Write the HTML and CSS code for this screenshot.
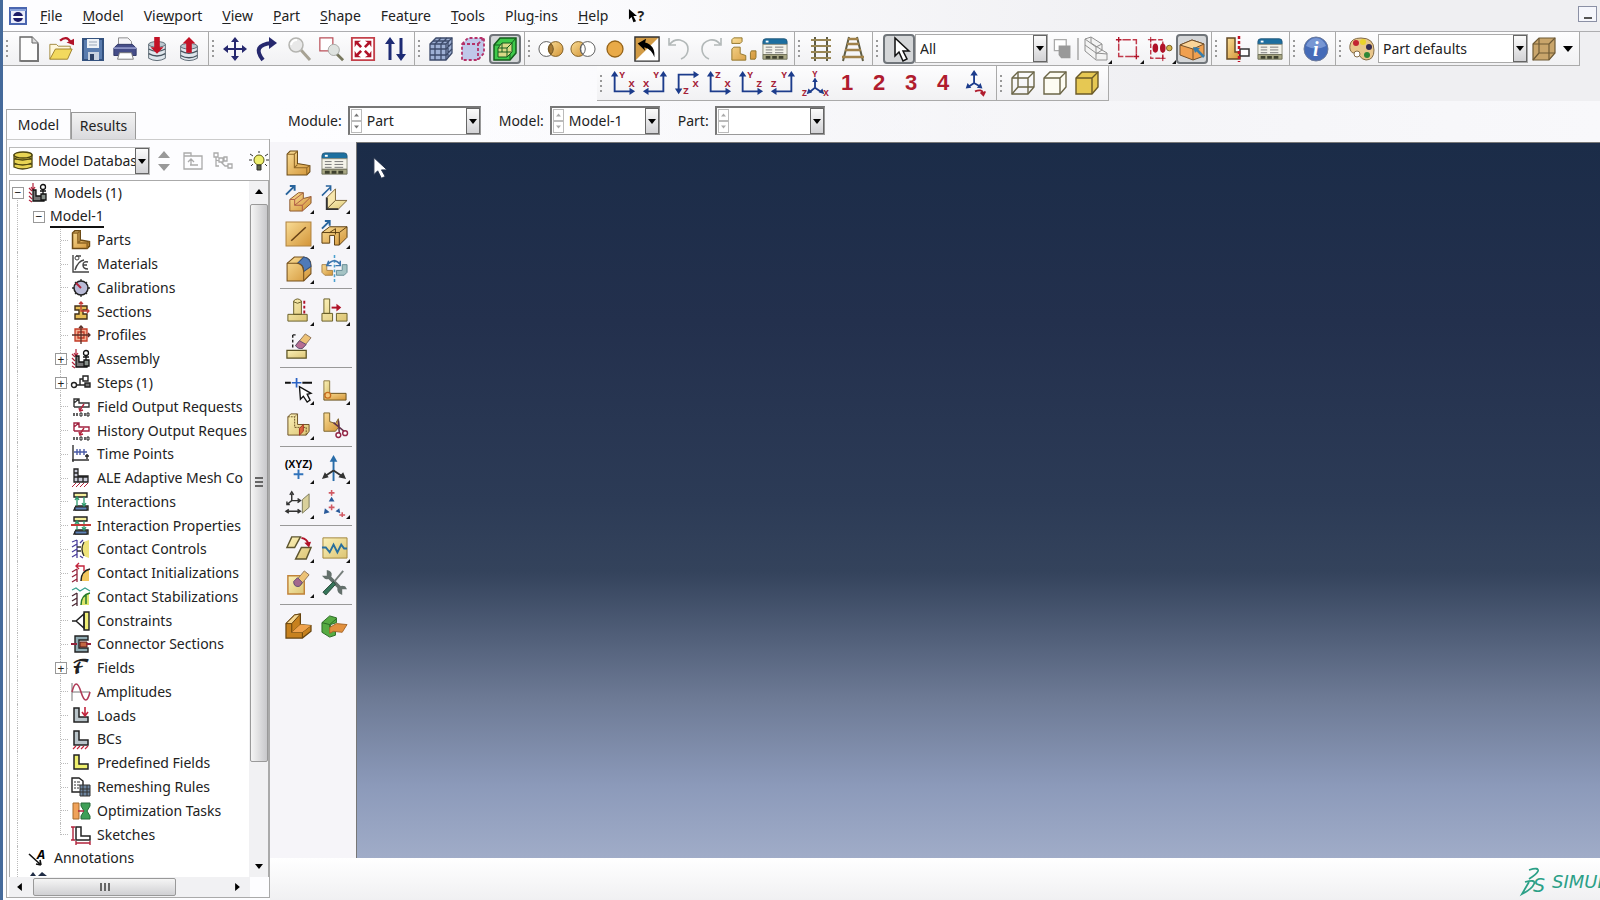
FILE: index.html
```html
<!DOCTYPE html>
<html lang="en">
<head>
    <meta charset="UTF-8">
    <meta name="viewport" content="width=device-width, initial-scale=1.0">
    <title>Model-1</title>
    <link rel="stylesheet" href="styles.css">
</head>
<body>
    <!-- shared icons -->
    <svg class="sprite" aria-hidden="true">
        <defs>
            <linearGradient id="gold" x1="0" y1="0" x2="1" y2="1">
                <stop offset="0" stop-color="#f9dc95"/><stop offset="1" stop-color="#d39538"/>
            </linearGradient>
            <linearGradient id="cream" x1="0" y1="0" x2="1" y2="1">
                <stop offset="0" stop-color="#fbf1b8"/><stop offset="1" stop-color="#dcc474"/>
            </linearGradient>
        </defs>
        <symbol id="table" viewBox="0 0 28 26">
            <path d="M1 5q0-3 3-3h20q3 0 3 3v3H1z" fill="#1c6fa0" stroke="#24587a"/>
            <path d="M4 5h3" stroke="#fff" stroke-width="2"/>
            <path d="M1 8h26v11H1z" fill="#f4f3ea" stroke="#8b8c7c"/>
            <path d="M4 11h7M4 14h7M4 17h7M14 11h9M14 14h9M14 17h9" stroke="#777" stroke-width="1"/>
            <path d="M1 19h26v5H1z" fill="#a9a884" stroke="#6f7059"/>
            <path d="M4 22h5M11 22h5M18 22h5" stroke="#3f412f" stroke-width="3"/>
        </symbol>
        <symbol id="lpart" viewBox="0 0 26 26">
            <path d="M2 4l3-3h7v12l12 2v6l-3 3H2z" fill="url(#gold)" stroke="#6b4a16"/>
            <path d="M2 4h7v13h12v7M9 4l3-3M9 17l3-3M21 17l3-2" fill="none" stroke="#8f6625"/>
        </symbol>
        <symbol id="cube" viewBox="0 0 26 26">
            <path d="M2 8l6-6h16v15l-6 7H2z"/><path d="M2 8h16v16M18 8l6-6" fill="none"/>
        </symbol>
        <symbol id="lgrey" viewBox="0 0 20 20">
            <path d="M3 2h5v9h9v5H3z" stroke="#222" stroke-width="1.5"/>
        </symbol>
        <symbol id="contact" viewBox="0 0 20 20">
            <path d="M3 1h13v4H3zM5 14h12v4H3z" fill="#f5ef9c" stroke="#222" stroke-width="1.4"/>
            <path d="M4 15h12v3H4z" fill="#5f83b8" stroke="#222"/>
            <path d="M6 5v9M13 5v9M4 8l2-3 2 3M11 11l2 3 2-3" fill="none" stroke="#2c9a6c" stroke-width="1.3"/>
        </symbol>
        <symbol id="assembly" viewBox="0 0 20 20">
            <path d="M1 5l3 3M1 9l3 3M1 13l3 3M1 17l3 2M5 0v6M3 4l2 3 2-3" fill="none" stroke="#b2243c" stroke-width="1.2"/>
            <path d="M5 7h3v6h8v5H5z" fill="#777" stroke="#111" stroke-width="1.3"/>
            <path d="M15 6v5M12 8h6" stroke="#111" stroke-width="1.3"/><circle cx="15" cy="4" r="2.5" fill="#fff" stroke="#111" stroke-width="1.3"/>
            <path d="M13 11h5v6h-5z" fill="#87908a" stroke="#111" stroke-width="1.3"/>
        </symbol>
        <symbol id="output" viewBox="0 0 20 20">
            <path d="M3 10V2h5v4h10v4H3M3 6l5-4" fill="none" stroke-width="1.4"/>
            <path d="M13 7l-4 6M8 11l1 3 3-1" fill="none" stroke="#b2243c" stroke-width="1.4"/>
            <path d="M3 16v3M6 16v3M14 16v3" stroke="#222" stroke-width="1.4"/><path d="M9 16h2v3H9zM16 16h2v3h-2z" fill="none" stroke="#222"/>
        </symbol>
        <symbol id="down" viewBox="0 0 10 6"><path d="M0 0h10L5 6z"/></symbol>
        <symbol id="up" viewBox="0 0 10 6"><path d="M0 6h10L5 0z"/></symbol>
    </svg>

    <nav class="menubar">
        <svg class="app-icon" viewBox="0 0 18 18"><path d="M1 1h16v16H1z" fill="#e9ecfa" stroke="#4a66b0" stroke-width="2"/><path d="M1 3h16" stroke="#8ba4dc" stroke-width="2"/><circle cx="9" cy="10" r="5" fill="#1d1c68"/><path d="M3 10h12" stroke="#fff" stroke-width="2"/></svg>
        <a href="#"><u>F</u>ile</a>
        <a href="#"><u>M</u>odel</a>
        <a href="#">Vie<u>w</u>port</a>
        <a href="#"><u>V</u>iew</a>
        <a href="#"><u>P</u>art</a>
        <a href="#"><u>S</u>hape</a>
        <a href="#">Feat<u>u</u>re</a>
        <a href="#"><u>T</u>ools</a>
        <a href="#">Plu<u>g</u>-ins</a>
        <a href="#"><u>H</u>elp</a>
        <button class="context-help" aria-label="Context help"><svg viewBox="0 0 10 18"><path d="M1 1v12l3-3 2 6 3-1-3-6h4z"/></svg><b>?</b></button>
        <button class="minimize" aria-label="Minimize"></button>
    </nav>

    <div class="toolbar">
        <div class="group">
            <i class="grip"></i>
            <button aria-label="New"><svg viewBox="0 0 26 26"><path d="M4 1h12l6 6v18H4z" fill="#fdfdfd" stroke="#666" stroke-width="1.3"/><path d="M16 1v6h6" fill="#ddd" stroke="#666"/><path d="M22 8v17H5" fill="none" stroke="#777" stroke-width="2"/></svg></button>
            <button aria-label="Open"><svg viewBox="0 0 28 26"><path d="M2 24V8h7l2 2h13v5" fill="#fff8dc" stroke="#a0873b"/><path d="M2 24l6-11h18l-5 11z" fill="#f3d95e" stroke="#9b7d29"/><path d="M13 4q7-6 11 1" fill="none" stroke="#b01228" stroke-width="2.5"/><path d="M20 6l8-4v7z" fill="#b01228"/></svg></button>
            <button aria-label="Save"><svg viewBox="0 0 26 26"><path d="M3 3h20v21H3z" fill="#5a7cae" stroke="#34527f" stroke-width="2"/><path d="M7 3h12v9H7z" fill="#eef2f6"/><path d="M9 6h8M9 9h8" stroke="#9aa7b8"/><path d="M8 16h11v8H8z" fill="#c8d2e0"/><path d="M10 18h4v6h-4z" fill="#2d4165"/></svg></button>
            <button aria-label="Print"><svg viewBox="0 0 28 26"><path d="M7 8V1h10l4 4v4" fill="#f5f5f8" stroke="#888"/><path d="M2 12l4-4h16l4 4v8H2z" fill="#454d88" stroke="#2f3565"/><path d="M2 12h24" stroke="#8b92c4" stroke-width="2"/><path d="M8 17h13l2 7H6z" fill="#fff" stroke="#777"/></svg></button>
            <button aria-label="Save model database"><svg viewBox="0 0 26 28"><path d="M4 9v15q9 5 18 0V9z" fill="#dfe6ec" stroke="#56636e"/><path d="M4 14q9 5 18 0M4 19q9 5 18 0" fill="none" stroke="#47545f" stroke-width="1.5"/><ellipse cx="13" cy="9" rx="9" ry="3" fill="#bcc7cf" stroke="#56636e"/><path d="M10 1h6v11h4l-7 7-7-7h4z" fill="#c31226"/></svg></button>
            <button aria-label="Import model database"><svg viewBox="0 0 26 28"><path d="M4 11v13q9 5 18 0V11z" fill="#dfe6ec" stroke="#56636e"/><path d="M4 16q9 5 18 0M4 21q9 5 18 0" fill="none" stroke="#47545f" stroke-width="1.5"/><ellipse cx="13" cy="11" rx="9" ry="3" fill="#bcc7cf" stroke="#56636e"/><path d="M10 18V8H6l7-7 7 7h-4v10z" fill="#c31226"/></svg></button>
        </div>
        <div class="group">
            <i class="grip"></i>
            <button aria-label="Pan"><svg viewBox="0 0 26 26"><path d="M13 4v18M4 13h18" stroke="#26286e" stroke-width="2"/><path d="M13 1l4 5H9zM13 25l4-5H9zM1 13l5-4v8zM25 13l-5-4v8z" fill="#26286e"/></svg></button>
            <button aria-label="Rotate"><svg viewBox="0 0 26 26"><path d="M9 24Q-3 9 18 7" fill="none" stroke="#26286e" stroke-width="4"/><path d="M15 1l8 6-8 6z" fill="#26286e"/></svg></button>
            <button aria-label="Magnify"><svg viewBox="0 0 26 26"><path d="M15 14l9 10" stroke="#a7a294" stroke-width="3"/><circle cx="10" cy="9" r="7" fill="#e8e8e8" stroke="#b4b4b0" stroke-width="1.5"/><path d="M5 9q1-5 6-5" fill="none" stroke="#fff" stroke-width="2"/></svg></button>
            <button aria-label="Box zoom"><svg viewBox="0 0 28 28"><path d="M2 2h14v14H2z" fill="#fff" stroke="#b94f58" stroke-width="1.3"/><path d="M20 19l7 7" stroke="#77775d" stroke-width="3"/><circle cx="17" cy="15" r="6" fill="#dfe3e0" stroke="#a5a8a4"/></svg></button>
            <button aria-label="Auto-fit"><svg viewBox="0 0 28 28"><path d="M2 2h24v24H2z" fill="#fff" stroke="#c4414b" stroke-width="2"/><g fill="#b01228"><path d="M5 5h7l-3 2 4 4-2 2-4-4-2 3zM23 5v7l-2-3-4 4-2-2 4-4-3-2zM5 23v-7l2 3 4-4 2 2-4 4 3 2zM23 23h-7l3-2-4-4 2-2 4 4 2-3z"/></g></svg></button>
            <button aria-label="Cycle views"><svg viewBox="0 0 26 26"><path d="M8 5v19M19 2v18" stroke="#1d2b74" stroke-width="3"/><path d="M8 1l5 7H3zM19 25l5-7H14z" fill="#1d2b74"/></svg></button>
        </div>
        <div class="group">
            <i class="grip"></i>
            <button aria-label="Show native mesh"><svg viewBox="0 0 26 26"><g fill="#9eb0d4" stroke="#3c4a6a" stroke-width="1.3"><use href="#cube"/><path d="M7 8v16M13 8v16M2 13h16l6-6M2 19h16l6-6M7 8l6-6M13 8l6-6M20 6v15M5 5h16" fill="none"/></g></svg></button>
            <button aria-label="Show seeds"><svg viewBox="0 0 26 26"><g fill="#c0c8ea" stroke="#b53169" stroke-width="1.8" stroke-dasharray="3 2"><use href="#cube"/></g></svg></button>
            <button class="pressed" aria-label="Shaded"><svg viewBox="0 0 26 26"><path d="M2 9l6-7h16v15l-6 7H2z" fill="#3fc94a" stroke="#145c1c" stroke-width="1.5"/><path d="M2 9h16v15M18 9l6-7" fill="none" stroke="#145c1c"/><path d="M6 12l4-5h10v9l-5 5H6z" fill="#d9d987" stroke="#145c1c"/><path d="M6 12h9v9M15 12l5-5M10 7v9H6M10 16h9" fill="none" stroke="#145c1c"/></svg></button>
        </div>
        <div class="group">
            <i class="grip"></i>
            <button aria-label="Intersect"><svg viewBox="0 0 28 26"><circle cx="9" cy="13" r="8" fill="#fff" stroke="#555"/><circle cx="19" cy="13" r="8" fill="url(#gold)" stroke="#7b5a20"/><path d="M14 7q-5 6 0 12 5-6 0-12" fill="#a77b35" stroke="#6b5021"/></svg></button>
            <button aria-label="Subtract"><svg viewBox="0 0 28 26"><circle cx="9" cy="13" r="8" fill="url(#gold)" stroke="#7b5a20"/><circle cx="19" cy="13" r="8" fill="#fff" stroke="#555"/><path d="M14 7q-5 6 0 12 5-6 0-12" fill="#fff" stroke="#555"/></svg></button>
            <button aria-label="Replace all"><svg viewBox="0 0 26 26"><circle cx="13" cy="13" r="8" fill="#e9aa48" stroke="#966419" stroke-width="1.3"/></svg></button>
            <button aria-label="Swap"><svg viewBox="0 0 28 28"><path d="M1 1h26v26H1z" fill="#fff"/><path d="M1 1h26L1 27z" fill="#d29b45"/><path d="M1 1h26v26H1z" fill="none" stroke="#333" stroke-width="1.5"/><path d="M4 8l9-5-1 4q11 3 10 16-3-9-11-11l1 4z"/></svg></button>
            <button aria-label="Undo"><svg viewBox="0 0 26 26"><path d="M4 8q4-5 10-4 8 2 8 9 0 7-7 10M3 2v7h7" fill="none" stroke="#b2b8b8" stroke-width="1.6"/></svg></button>
            <button aria-label="Redo"><svg viewBox="0 0 26 26"><path d="M22 8q-4-5-10-4-8 2-8 9 0 7 7 10M23 2v7h-7" fill="none" stroke="#b2b8b8" stroke-width="1.6"/></svg></button>
            <button aria-label="Create display group"><svg viewBox="0 0 28 26"><g fill="url(#gold)" stroke="#8f7228"><path d="M2 3l2-2h9v4l-2 2H2zM2 13l2-2h7v7l6 2v5H2zM22 17l1-2h5v7l-1 2h-5z"/></g></svg></button>
            <button aria-label="Display group manager"><svg viewBox="0 0 28 26"><use href="#table"/></svg></button>
        </div>
        <div class="group">
            <i class="grip"></i>
            <button aria-label="Parallel"><svg viewBox="0 0 26 26"><path d="M7 1v24M19 1v24" stroke="#5e5c44" stroke-width="2"/><path d="M3 4h20M3 10h20M3 16h20M3 22h20" stroke="#998755" stroke-width="2"/></svg></button>
            <button aria-label="Perspective"><svg viewBox="0 0 26 26"><path d="M9 1L3 25M17 1l6 24" stroke="#5e5c44" stroke-width="2"/><path d="M8 3h10M7 8h12M5 14h16M2 21h22" stroke="#a1824a" stroke-width="2.4"/></svg></button>
        </div>
        <div class="group">
            <i class="grip"></i>
            <button class="pressed" aria-label="Select"><svg viewBox="0 0 26 26"><path d="M9 2v18l4-4 4 9 4-2-4-8h6z" fill="#fff" stroke="#111" stroke-width="1.5"/></svg></button>
            <div class="combo combo-filter">
                <select aria-label="Selection filter"><option>All</option></select>
                <span class="arrow"><svg><use href="#down"/></svg></span>
            </div>
            <button class="slim" aria-label="Highlight"><svg viewBox="0 0 26 26"><path d="M4 2h14v13H4z" fill="#fff" stroke="#aaa" stroke-width="1.5"/><path d="M9 9h14v15H12l-3-4z" fill="#999"/></svg></button>
            <i class="divider"></i>
            <button class="more" aria-label="Selection entity"><svg viewBox="0 0 26 26"><g fill="#f3f3f3" stroke="#909090"><path d="M2 3l6-2 11 7v6l5 3v7H13L2 15z"/><path d="M2 3l11 8v12M13 11l6-3M13 18l6-4M2 9l11 8 11 1M8 1v6l11 7" fill="none"/></g></svg></button>
            <button class="more" aria-label="Drag shape"><svg viewBox="0 0 28 28"><path d="M8 4h15v15M20 22H4V8" fill="none" stroke="#c13a4b" stroke-width="1.6" stroke-dasharray="9 2"/><path d="M1 4h6M4 1v6M20 22h6M23 19v6" stroke="#b01228" stroke-width="1.5"/></svg></button>
            <button class="more" aria-label="Inside and crossing"><svg viewBox="0 0 28 28"><path d="M5 4h12v20H4V4" fill="none" stroke="#c13a4b" stroke-width="1.5" stroke-dasharray="5 2"/><path d="M1 4h6M4 1v6M14 24h6M17 21v6" stroke="#b01228"/><ellipse cx="9" cy="13" rx="3" ry="5" fill="#b01228"/><ellipse cx="17" cy="13" rx="3" ry="5" fill="#b01228"/><circle cx="24" cy="13" r="3" fill="#d6b54c" stroke="#765b1c"/></svg></button>
            <button class="pressed" aria-label="Select from exterior"><svg viewBox="0 0 26 26"><path d="M1 9l12-5 12 4v12l-11 4-13-5z" fill="#f0a050" stroke="#75502a"/><path d="M1 9l12-5 12 4-11 5z" fill="#fbd59a" stroke="#75502a"/><path d="M14 13v11" stroke="#75502a"/><path d="M17 13l8 8" stroke="#387dab" stroke-width="2.5"/><path d="M14 11l7 1-5 5z" fill="#387dab"/></svg></button>
        </div>
        <div class="group">
            <i class="grip"></i>
            <button aria-label="Create field"><svg viewBox="0 0 26 26"><path d="M2 2h8v14h5v7H2z" fill="url(#gold)" stroke="#644a24" stroke-width="1.5"/><path d="M15 13h9v7h-9z" fill="#fff" stroke="#333" stroke-width="1.5"/><path d="M14 0v26" stroke="#c31226" stroke-width="2.5" stroke-dasharray="3 2"/></svg></button>
            <button aria-label="Field manager"><svg viewBox="0 0 28 26"><use href="#table"/></svg></button>
        </div>
        <div class="group">
            <i class="grip"></i>
            <button aria-label="Query information"><svg viewBox="0 0 26 26"><circle cx="13" cy="13" r="12" fill="#456bb8" stroke="#6d7b9b"/><path d="M3 10q3-8 10-8t10 8q-10 5-20 0" fill="#7796d3"/><text x="10" y="20" font-size="20" font-style="italic" font-weight="bold" fill="#fff" class="serif">i</text></svg></button>
        </div>
        <div class="group">
            <i class="grip"></i>
            <button aria-label="Colors"><svg viewBox="0 0 26 26"><path d="M1 9Q2 2 12 2q13 0 13 12 0 10-8 10-4 0-7-5-3-4-6-2Q0 15 1 9z" fill="#e8c68b" stroke="#846c46"/><circle cx="7" cy="7" r="3" fill="#c32432"/><circle cx="14" cy="6" r="3" fill="#ebd32c"/><circle cx="20" cy="11" r="3" fill="#342a52"/><circle cx="18" cy="19" r="3" fill="#2e8736"/><circle cx="8" cy="18" r="3" fill="#fff" stroke="#846c46"/></svg></button>
            <div class="combo combo-color">
                <select aria-label="Color coding"><option>Part defaults</option></select>
                <span class="arrow"><svg><use href="#down"/></svg></span>
            </div>
            <button aria-label="Translucency"><svg viewBox="0 0 26 26"><g fill="#c9a56b" stroke="#6e5a35" stroke-width="1.2"><use href="#cube"/><path d="M8 2v15h16M2 24l6-7" fill="none"/></g></svg></button>
            <button class="drop" aria-label="Translucency level"><svg><use href="#down"/></svg></button>
        </div>
    </div>

    <div class="toolbar views">
        <div class="group">
            <i class="grip"></i>
            <button aria-label="Front view"><svg class="axes" viewBox="0 0 28 28"><path d="M5 5v18h17"/><path class="tip" d="M5 1l4 6H1zM27 23l-6-4v8z"/><text x="10" y="9">Y</text><text x="20" y="18">X</text></svg></button>
            <button aria-label="Back view"><svg class="axes" viewBox="0 0 28 28"><path d="M23 5v18H6"/><path class="tip" d="M23 1l4 6h-8zM1 23l6-4v8z"/><text x="12" y="9">Y</text><text x="1" y="18">X</text></svg></button>
            <button aria-label="Top view"><svg class="axes" viewBox="0 0 28 28"><path d="M5 22V5h17"/><path class="tip" d="M5 26l4-6H1zM27 5l-6-4v8z"/><text x="20" y="18">X</text><text x="10" y="26">Z</text></svg></button>
            <button aria-label="Bottom view"><svg class="axes" viewBox="0 0 28 28"><path d="M5 5v18h17"/><path class="tip" d="M5 1l4 6H1zM27 23l-6-4v8z"/><text x="10" y="9">Z</text><text x="20" y="18">X</text></svg></button>
            <button aria-label="Left view"><svg class="axes" viewBox="0 0 28 28"><path d="M5 5v18h17"/><path class="tip" d="M5 1l4 6H1zM27 23l-6-4v8z"/><text x="10" y="9">Y</text><text x="20" y="18">Z</text></svg></button>
            <button aria-label="Right view"><svg class="axes" viewBox="0 0 28 28"><path d="M23 5v18H6"/><path class="tip" d="M23 1l4 6h-8zM1 23l6-4v8z"/><text x="12" y="9">Y</text><text x="1" y="18">Z</text></svg></button>
            <button aria-label="Isometric view"><svg class="axes small" viewBox="0 0 28 28"><path d="M14 11v8l-6 5M14 19l7 5"/><path class="tip" d="M14 8l3 5h-6zM5 26l2-6 4 4zM24 26l-2-6-4 4z"/><text x="11" y="7">Y</text><text x="0" y="28">Z</text><text x="23" y="28">X</text></svg></button>
            <button class="view-number">1</button>
            <button class="view-number">2</button>
            <button class="view-number">3</button>
            <button class="view-number">4</button>
            <button aria-label="Save view"><svg class="axes" viewBox="0 0 28 28"><path d="M13 4v10l-6 4M13 14l7 4"/><path class="tip" d="M13 0l4 6H9zM4 20l2-6 4 5zM22 20l-2-6-4 5z"/><path class="turn" d="M14 23q7-3 9 2M20 24l3 3 2-4"/></svg></button>
        </div>
        <div class="group">
            <i class="grip"></i>
            <button aria-label="Wireframe"><svg viewBox="0 0 26 26"><g fill="none" stroke="#6b6547" stroke-width="1.4"><use href="#cube"/><path d="M8 2v15h16M2 24l6-7"/></g></svg></button>
            <button aria-label="Hidden line"><svg viewBox="0 0 26 26"><g fill="#fdfcf3" stroke="#6b6547" stroke-width="1.4"><use href="#cube"/></g></svg></button>
            <button aria-label="Shaded solid"><svg viewBox="0 0 26 26"><g fill="#e6c853" stroke="#6b5a27" stroke-width="1.4"><use href="#cube"/></g></svg></button>
        </div>
    </div>

    <main class="workspace">
        <aside class="browser">
            <div class="tabs">
                <button class="tab active">Model</button>
                <button class="tab">Results</button>
            </div>
            <div class="pane">
                <div class="database">
                    <div class="combo combo-database">
                        <svg class="stack" viewBox="0 0 22 20"><g fill="#e8d454" stroke="#4e460f" stroke-width="1.3"><path d="M2 13v3q8 4 18 0v-3z"/><path d="M2 8v4q8 4 18 0V8z"/><path d="M2 4v3q8 4 18 0V4z"/><ellipse cx="11" cy="4" rx="9" ry="3"/></g></svg>
                        <select aria-label="Database"><option>Model Database</option></select>
                        <span class="arrow"><svg><use href="#down"/></svg></span>
                    </div>
                    <button class="updown" aria-label="Previous or next"><svg viewBox="0 0 12 20"><path d="M0 7h12L6 0zM0 13h12l-6 7z" fill="#999"/></svg></button>
                    <button aria-label="Parent"><svg viewBox="0 0 20 18"><path d="M1 4V1h7v3h11v13H1zM1 4h7M7 13h8M8 13V7M5 10l3-3 3 3" fill="none" stroke="#aaa" stroke-width="1.3"/></svg></button>
                    <button aria-label="Root"><svg viewBox="0 0 20 18"><path d="M1 1h4v4H1zM6 6h4v4H6zM11 5h3v4h-3zM15 12h4v4h-4zM3 5v9h3M8 10l4 4h3M3 8l3 1" fill="none" stroke="#aaa" stroke-width="1.3"/></svg></button>
                    <button class="tip-button" aria-label="Tip"><svg viewBox="0 0 20 20"><path d="M10 0v2M1 3l3 2M19 3l-3 2M0 9h3M17 9h3M2 15l2-2M18 15l-2-2" stroke="#333"/><circle cx="10" cy="9" r="5" fill="#eff06e" stroke="#5d5b15"/><path d="M8 14h4v5H8z" fill="#5d6246" stroke="#333"/></svg></button>
                </div>
                <div class="tree-frame">
                    <ul class="tree">
                        <li class="root first"><button class="toggle" aria-label="Collapse">&minus;</button><svg><use href="#assembly"/></svg><span>Models (1)</span></li>
                        <li class="model"><button class="toggle" aria-label="Collapse">&minus;</button><span class="current">Model-1</span></li>
                        <li class="leaf"><svg viewBox="0 0 26 26"><use href="#lpart" stroke-width="2"/></svg><span>Parts</span></li>
                        <li class="leaf"><svg viewBox="0 0 20 20"><path d="M2 1v17h16M4 16q3-9 9-10M17 8q-5-1-5 3t5 4M12 11h4M5 2h5" fill="none" stroke="#444" stroke-width="1.4"/><circle cx="6" cy="4" r="2" fill="none" stroke="#444"/></svg><span>Materials</span></li>
                        <li class="leaf"><svg viewBox="0 0 20 20"><path d="M10 1v18M1 10h18M4 4l12 12M16 4L4 16" stroke="#333" stroke-width="1.3"/><circle cx="10" cy="10" r="7" fill="#b9bbd7" stroke="#222" stroke-width="1.5"/><path d="M10 10L5 5" stroke="#b2243c" stroke-width="2"/></svg><span>Calibrations</span></li>
                        <li class="leaf"><svg viewBox="0 0 20 20"><path d="M4 4h12v4h-4v4h4v5H4v-5h4V8H4z" fill="#e7bd55" stroke="#412f18" stroke-width="1.4"/><path d="M10 0v9h8M8 2l2-2 2 2M16 7l2 2-2 2" fill="none" stroke="#c33b37" stroke-width="1.3"/></svg><span>Sections</span></li>
                        <li class="leaf"><svg viewBox="0 0 20 20"><path d="M4 4h12v12H4zM7 7h6v6H7z" fill="#f3b192" stroke="#c33b27" stroke-width="1.3"/><path d="M10 1v18M1 10h18M8 3l2-2 2 2M17 8l2 2-2 2" fill="none" stroke="#5b2f27" stroke-width="1.3"/></svg><span>Profiles</span></li>
                        <li class="leaf"><button class="toggle" aria-label="Expand">+</button><svg><use href="#assembly"/></svg><span>Assembly</span></li>
                        <li class="leaf"><button class="toggle" aria-label="Expand">+</button><svg viewBox="0 0 20 20"><path d="M5 12h9M9 12V6h3" fill="none" stroke="#222" stroke-width="1.4"/><circle cx="3" cy="12" r="2.5" fill="#fff" stroke="#222" stroke-width="1.4"/><path d="M12 3h5v5h-5z" fill="#fff" stroke="#222" stroke-width="1.4"/><path d="M14 10h5v4h-5z" fill="#777" stroke="#222" stroke-width="1.4"/></svg><span>Steps (1)</span></li>
                        <li class="leaf"><svg stroke="#333"><use href="#output"/></svg><span>Field Output Requests</span></li>
                        <li class="leaf"><svg stroke="#a12240"><use href="#output"/></svg><span>History Output Reques</span></li>
                        <li class="leaf"><svg viewBox="0 0 20 20"><path d="M2 1v17M1 16h17" stroke="#333" stroke-width="1.4"/><path d="M3 8h13M6 5v6M9 5v6M13 5v6" stroke="#4a5ba6" stroke-width="1.4"/><path d="M16 10v5M14 12h4" stroke="#222" stroke-width="1.4"/></svg><span>Time Points</span></li>
                        <li class="leaf"><svg viewBox="0 0 20 20"><path d="M3 1h4v7h10v6H3zM3 5h4M3 9h14M7 8v6M12 8v6" fill="#c9cbd8" stroke="#222" stroke-width="1.3"/><path d="M1 19l4-4M5 19l4-4M9 19l4-4M13 19l4-4" stroke="#b2243c"/></svg><span>ALE Adaptive Mesh Co</span></li>
                        <li class="leaf"><svg><use href="#contact"/></svg><span>Interactions</span></li>
                        <li class="leaf"><svg viewBox="0 0 20 20"><use href="#contact"/><path d="M0 9h20" stroke="#c33b37" stroke-width="2"/></svg><span>Interaction Properties</span></li>
                        <li class="leaf"><svg viewBox="0 0 20 20"><path d="M18 1q-8 2-8 9t8 9z" fill="#efe37a"/><path d="M6 1v18M1 3l5-2M1 8l5-3M1 13l5-3M1 18l5-3M9 4l3-3M9 17l3 2" stroke="#4a3f9c" stroke-width="1.3"/><path d="M13 3q-4 7 0 14M6 8h4M6 12h4" fill="none" stroke="#333" stroke-width="1.3"/></svg><span>Contact Controls</span></li>
                        <li class="leaf"><svg viewBox="0 0 20 20"><path d="M18 6q-9 2-8 12h8z" fill="#f3c65c"/><path d="M6 6v13M1 9l5-3M1 14l5-3M1 19l5-3" stroke="#93233a" stroke-width="1.3"/><path d="M19 6q-9 2-9 12" fill="none" stroke="#222" stroke-width="1.5"/><path d="M13 8V3H5M8 0L5 3l3 3" fill="none" stroke="#c3243c" stroke-width="1.4"/></svg><span>Contact Initializations</span></li>
                        <li class="leaf"><svg viewBox="0 0 20 20"><path d="M18 6q-9 2-8 12h8z" fill="#dde56c"/><path d="M6 6v13M1 9l5-3M1 14l5-3M1 19l5-3" stroke="#4b2833" stroke-width="1.3"/><path d="M19 6q-9 2-9 12M15 8v9" fill="none" stroke="#267b2b" stroke-width="1.5"/><path d="M1 3l4-2 4 3 5-3 5 3" fill="none" stroke="#39a28e" stroke-width="1.2"/></svg><span>Contact Stabilizations</span></li>
                        <li class="leaf"><svg viewBox="0 0 20 20"><path d="M13 1h5v18h-5z" fill="#f0ee75" stroke="#222" stroke-width="1.4"/><path d="M1 10h4l8-7v14l-8-7" fill="none" stroke="#222" stroke-width="1.5"/></svg><span>Constraints</span></li>
                        <li class="leaf"><svg viewBox="0 0 20 20"><path d="M17 2H4v16h13v-4H8V6h9z" fill="#8faab2" stroke="#222" stroke-width="1.4"/><path d="M9 8h7v5H9z" fill="#c46743" stroke="#5c1a18"/><path d="M0 10h6M15 10h5" stroke="#93233a" stroke-width="2"/></svg><span>Connector Sections</span></li>
                        <li class="leaf"><button class="toggle" aria-label="Expand">+</button><b class="script">&#x1D4D5;</b><span>Fields</span></li>
                        <li class="leaf"><svg viewBox="0 0 20 20"><path d="M1 1v18M1 10h18" stroke="#777"/><path d="M1 10Q5-6 10 10t9 0" fill="none" stroke="#b03a56" stroke-width="1.6"/></svg><span>Amplitudes</span></li>
                        <li class="leaf"><svg viewBox="0 0 20 20" fill="#b9c4c9"><use href="#lgrey"/><path d="M14 1v8M11 6l3 4 3-4" fill="none" stroke="#c3243c" stroke-width="1.6"/></svg><span>Loads</span></li>
                        <li class="leaf"><svg viewBox="0 0 20 20" fill="#b9c4c9"><use href="#lgrey"/><path d="M2 20l3-3M6 20l3-3M10 20l3-3M14 20l3-3" stroke="#c3243c" stroke-width="1.2"/></svg><span>BCs</span></li>
                        <li class="leaf"><svg fill="#eff06e"><use href="#lgrey"/></svg><span>Predefined Fields</span></li>
                        <li class="leaf"><svg viewBox="0 0 20 20"><path d="M1 1h7l4 3v11H1z" fill="#fff" stroke="#222" stroke-width="1.4"/><path d="M3 5h2M6 5h3M3 8h2M6 8h3M3 11h2M6 11h2" stroke="#333"/><path d="M9 8h10v11H9z" fill="#6e86a0" stroke="#333"/><path d="M12 8v11M16 8v11M9 12h10M9 15h10" stroke="#333"/></svg><span>Remeshing Rules</span></li>
                        <li class="leaf"><svg viewBox="0 0 20 20"><path d="M2 2h6v16H2z" fill="#f0a25a" stroke="#a56a2b"/><path d="M10 2h9v3l-3 5 3 5v3h-9v-3l3-5-3-5z" fill="#3d9f57" stroke="#246b38"/><path d="M7 10h6" stroke="#b2243c" stroke-width="1.5"/></svg><span>Optimization Tasks</span></li>
                        <li class="leaf last"><svg viewBox="0 0 20 20"><path d="M5 2h5v9h9v4H5z" fill="#fff" stroke="#222" stroke-width="1.5"/><path d="M2 2v13M0 2h4M0 15h4M5 18h14M5 16v4M19 16v4" stroke="#b2243c" stroke-width="1.4"/></svg><span>Sketches</span></li>
                        <li class="root"><svg viewBox="0 0 20 20"><path d="M1 6l12 11M13 17l-5-1M13 17l-1-5" fill="none" stroke="#111" stroke-width="1.6"/><text x="9" y="11" font-size="13" font-weight="bold" font-style="italic">A</text></svg><span>Annotations</span></li>
                        <li class="root partial"><svg viewBox="0 0 20 20"><path d="M2 6l3-4 3 4zM10 6l4-4 5 4z" fill="#1f2c45"/></svg></li>
                    </ul>
                    <div class="vscroll">
                        <svg><use href="#up"/></svg>
                        <div class="thumb"><i></i></div>
                        <svg><use href="#down"/></svg>
                    </div>
                </div>
                <div class="hscroll">
                    <svg viewBox="0 0 6 10"><path d="M6 0v10L0 5z"/></svg>
                    <div class="thumb"><i></i></div>
                    <svg viewBox="0 0 6 10"><path d="M0 0v10l6-5z"/></svg>
                </div>
            </div>
        </aside>

        <section class="editor">
            <div class="context-bar">
                <label for="module">Module:</label>
                <div class="combo combo-module">
                    <span class="spin live"><svg><use href="#up"/></svg><svg><use href="#down"/></svg></span>
                    <select id="module"><option>Part</option></select>
                    <span class="arrow"><svg><use href="#down"/></svg></span>
                </div>
                <label for="model">Model:</label>
                <div class="combo">
                    <span class="spin"><svg><use href="#up"/></svg><svg><use href="#down"/></svg></span>
                    <select id="model"><option>Model-1</option></select>
                    <span class="arrow"><svg><use href="#down"/></svg></span>
                </div>
                <label for="part">Part:</label>
                <div class="combo">
                    <span class="spin"><svg><use href="#up"/></svg><svg><use href="#down"/></svg></span>
                    <select id="part"><option></option></select>
                    <span class="arrow"><svg><use href="#down"/></svg></span>
                </div>
            </div>
            <div class="stage">
                <div class="toolbox">
                    <div class="tools">
                        <button aria-label="Create part"><svg viewBox="0 0 26 26"><use href="#lpart"/></svg></button>
                        <button aria-label="Part manager"><svg viewBox="0 0 28 26"><use href="#table"/></svg></button>
                        <button class="more" aria-label="Extrude solid"><svg viewBox="0 0 28 28"><path d="M5 15l9-7h5v6l8-2v7l-9 8H5z" fill="url(#gold)" stroke="#8b572c"/><path d="M5 15h5v6l9-7M10 15l9-7M10 21h8v6M18 21l9-9" fill="none" stroke="#ae5b45"/><path d="M1 10l8-8M5 1h5v5" fill="none" stroke="#28639c" stroke-width="2"/></svg></button>
                        <button class="more" aria-label="Extrude shell"><svg viewBox="0 0 28 28"><path d="M6 13l9-9v12L6 25z" fill="#f7e6ad" stroke="#7b6538"/><path d="M6 25l9-9h12l-9 9z" fill="url(#cream)" stroke="#7b6538"/><path d="M6 13v12h12" fill="none" stroke="#333" stroke-width="2"/><path d="M1 11l9-9M5 1h5v5" fill="none" stroke="#28639c" stroke-width="1.6"/></svg></button>
                        <button class="more" aria-label="Wire"><svg viewBox="0 0 26 26"><path d="M1 2h24v23H1z" fill="url(#gold)" stroke="#b0823d"/><path d="M6 20L20 7" stroke="#664015" stroke-width="1.5"/></svg></button>
                        <button class="more" aria-label="Cut extrude"><svg viewBox="0 0 28 28"><path d="M1 13l8-6h18v11l-8 8h-5V16H9v8H1z" fill="url(#gold)" stroke="#5a3c11"/><path d="M1 13h18v13M19 13l8-6M9 13l6-4v6" fill="none" stroke="#5a3c11"/><path d="M1 9l7-7M4 1h5v5" fill="none" stroke="#28639c" stroke-width="2"/></svg></button>
                        <button class="more" aria-label="Round or fillet"><svg viewBox="0 0 26 26"><path d="M2 8l7-6h9q7 1 7 8v8l-7 7H2z" fill="url(#gold)" stroke="#75501c"/><path d="M12 8l6-6q7 1 7 9l-7 5q0-7-6-8z" fill="#4f7ab8" stroke="#33517e"/><path d="M2 8h10q6 1 6 8v9" fill="none" stroke="#75501c"/></svg></button>
                        <button aria-label="Mirror part"><svg viewBox="0 0 28 28"><path d="M1 10h5v6h6v5H4l-3-3z" fill="url(#gold)" stroke="#a9834a"/><path d="M27 10h-5v6h-6v5h8l3-3z" fill="#a5c3c4" stroke="#668a93"/><path d="M14 0v28" stroke="#4aa0cf" stroke-width="1.6" stroke-dasharray="3 2"/><path d="M7 10q7-8 13 0M8 6l-2 5h5M20 6v5h-5" fill="none" stroke="#3d74ac" stroke-width="1.5"/></svg></button>
                    </div>
                    <div class="tools">
                        <button class="more" aria-label="Edit feature"><svg viewBox="0 0 28 28"><path d="M3 18h20v7H3zM9 4q4-4 8 0v14H9z" fill="url(#cream)" stroke="#675d28"/><path d="M9 5q4 3 8 0" fill="none" stroke="#675d28"/><path d="M20 4v13" stroke="#b01228" stroke-width="2" stroke-dasharray="3 2"/></svg></button>
                        <button class="more" aria-label="Regenerate feature"><svg viewBox="0 0 28 28"><path d="M1 17h11v8H1zM16 17h11v8H16zM3 2h6v15H3z" fill="url(#cream)" stroke="#675d28"/><path d="M11 11h6" stroke="#b01228" stroke-width="2"/><path d="M16 7l5 4-5 4z" fill="#b01228"/></svg></button>
                        <button aria-label="Delete feature"><svg viewBox="0 0 28 28"><path d="M2 19h20v8H2z" fill="url(#cream)" stroke="#5c5324" stroke-width="1.3"/><path d="M8 3v14M8 3h5" stroke="#222" fill="none" stroke-width="1.5" stroke-dasharray="3 2"/><path d="M11 14L21 2l6 4-9 11z" fill="#edc276" stroke="#917557"/><path d="M11 14l4-5 7 4-4 4q-5 1-7-3z" fill="#b76d92" stroke="#5f4d73"/></svg></button>
                    </div>
                    <div class="tools">
                        <button class="more" aria-label="Partition edge"><svg viewBox="0 0 28 28"><path d="M0 7h6M18 7h10" stroke="#111" stroke-width="2"/><path d="M7 7h10M12 2v10" stroke="#2961c4" stroke-width="1.8"/><path d="M15 11l1 13 3-3 4 6 3-2-3-6 4-1z" fill="#fff" stroke="#111" stroke-width="1.4"/></svg></button>
                        <button class="more" aria-label="Partition face"><svg viewBox="0 0 28 28"><path d="M3 5h6v14H3z" fill="url(#cream)" stroke="#8d7942"/><path d="M7 18h19v7H3v-6z" fill="url(#gold)" stroke="#69501c"/><circle cx="7" cy="20" r="3" fill="#f5c87a" stroke="#c76b1d" stroke-width="1.4"/></svg></button>
                        <button class="more" aria-label="Partition cell"><svg viewBox="0 0 28 28"><path d="M3 6l3-3h7v11h12v7l-3 4H3z" fill="url(#cream)" stroke="#6b5124"/><path d="M3 6h7v11h12v8M10 6l3-3" fill="none" stroke="#6b5124" stroke-dasharray="2 1"/><path d="M15 18l4-4v7l-4 4z" fill="#db643c" stroke="#a12e22"/></svg></button>
                        <button aria-label="Repair"><svg viewBox="0 0 28 28"><path d="M3 2h6v9l6 2 3-5 1 8-4 5H3z" fill="url(#gold)" stroke="#7c642d"/><path d="M13 12l12 10M18 10l1 13" stroke="#61344c" stroke-width="1.6"/><circle cx="18" cy="25" r="2.5" fill="#fff" stroke="#932647" stroke-width="1.5"/><circle cx="25" cy="23" r="2.5" fill="#fff" stroke="#932647" stroke-width="1.5"/></svg></button>
                    </div>
                    <div class="tools">
                        <button class="more" aria-label="Datum point"><svg viewBox="0 0 28 28"><text x="14" y="13" font-size="11" font-weight="bold" text-anchor="middle" class="xyz">(XYZ)</text><path d="M9 20h10M14 15v10" stroke="#3173bb" stroke-width="2"/></svg></button>
                        <button class="more" aria-label="Datum axis"><svg viewBox="0 0 28 28"><path d="M13 27V4" stroke="#296ca9" stroke-width="2"/><path d="M13 0l4 7H9z" fill="#296ca9"/><path d="M13 16L4 22M13 16l9 6" stroke="#333" stroke-width="2"/><path d="M1 25l3-7 4 5zM26 25l-3-7-5 5z" fill="#333"/></svg></button>
                        <button class="more" aria-label="Datum plane"><svg viewBox="0 0 28 28"><path d="M18 10l7-6v14l-7 6z" fill="#d9d09b" stroke="#7d7b5b"/><path d="M7 4v7l-5 4M7 11h8M5 5l2-3 2 3M13 9l3 2-3 2M2 12v3h3M2 22h13M4 20l-3 2 3 2M13 20l3 2-3 2" fill="none" stroke="#333" stroke-width="1.5"/></svg></button>
                        <button class="more" aria-label="Datum CSYS"><svg viewBox="0 0 28 28"><path d="M8 3h6M11 0v6M8 18h6M11 15v6M19 26h6M22 23v5" stroke="#d15963" stroke-width="1.6"/><path d="M11 7l3 5H8zM3 25l1-6 5 4zM20 24l-1-5-4 3z" fill="#29599a"/></svg></button>
                    </div>
                    <div class="tools">
                        <button class="more" aria-label="Offset faces"><svg viewBox="0 0 28 28"><path d="M7 3h9l-6 11H2zM17 14h10l-5 12H11z" fill="url(#cream)" stroke="#5e5630" stroke-width="1.5"/><path d="M17 4q6 1 7 6" fill="none" stroke="#b01228" stroke-width="2"/><path d="M20 9l7-1-2 6z" fill="#b01228"/></svg></button>
                        <button class="more" aria-label="Stitch edges"><svg viewBox="0 0 28 28"><path d="M2 4h25v21H2z" fill="url(#cream)" stroke="#a2863c"/><path d="M1 14h4l4 5 4-8 4 8 4-8 3 4h3" fill="none" stroke="#296f9d" stroke-width="2"/></svg></button>
                        <button class="more" aria-label="Remove faces"><svg viewBox="0 0 28 28"><path d="M3 7h17v19H3z" fill="url(#cream)" stroke="#c0833a" stroke-width="1.5"/><path d="M10 14L20 2l5 4-9 11z" fill="#edc276" stroke="#917557"/><path d="M9 13l4-4 5 5-3 4q-6 1-6-5z" fill="#a4678d" stroke="#5f4d73"/></svg></button>
                        <button aria-label="Tools"><svg viewBox="0 0 28 28"><path d="M7 7l14 14" stroke="#64706c" stroke-width="4"/><path d="M6 1q6 1 5 6-2 5-7 3L1 7l5 0zM22 27q-6-2-5-7 3-4 8-2l2 3-5 0z" fill="#64706c"/><path d="M23 2L13 14" stroke="#777f7c" stroke-width="2"/><path d="M13 13l2 3L5 27l-3-3z" fill="#35765a" stroke="#2a4839"/></svg></button>
                    </div>
                    <div class="tools">
                        <button aria-label="Assign midsurface"><svg viewBox="0 0 28 28"><path d="M1 11l9-9 6-1v11l11 1v6l-9 7H1z" fill="#c7811e" stroke="#65430f" stroke-width="1.2"/><path d="M1 11l9-9 6-1-9 10z" fill="#f5d58f" stroke="#65430f"/><path d="M7 11v9l9-8V1M7 20h11l9-7M18 20v6" fill="none" stroke="#65430f"/><path d="M7 20l9-8 11 1-9 7z" fill="#efa24c"/></svg></button>
                        <button aria-label="Assign thickness"><svg viewBox="0 0 28 28"><path d="M1 10l8-7 7 2v5l-6 2v4l5 3v4l-6 2-8-5z" fill="#56ab42" stroke="#2b6a24"/><path d="M1 10l8 2 7-6M9 12v5" fill="none" stroke="#2b6a24"/><path d="M9 15l7-4 11 1-5 8-9-1-4 2z" fill="#e2903e" stroke="#a7672b"/></svg></button>
                    </div>
                </div>
                <div class="viewport">
                    <svg class="pointer" viewBox="0 0 16 24" aria-hidden="true"><path d="M1 1v18l4-4 4 8 4-2-4-7h6z" fill="#fff" stroke="#24324c"/></svg>
                </div>
            </div>
            <footer class="brand">
                <svg viewBox="0 0 26 30" aria-hidden="true"><path d="M9 3q10-3 9 1-1 3-9 8M5 15q11-3 9 2-2 5-12 10L9 15" fill="none" stroke="#2ba087" stroke-width="1.8"/><text x="13" y="25" font-size="19" font-style="italic">S</text></svg>
                <span>SIMULIA</span>
            </footer>
        </section>
    </main>
</body>
</html>
```
FILE: styles.css
```css
* {
    box-sizing: border-box;
}
body {
    margin: 0;
    height: 100vh;
    display: flex;
    flex-direction: column;
    overflow: hidden;
    border-left: 3px solid #456a9b;
    background: linear-gradient(to right, #fdfdff 30%, #efeff2 75%);
    color: #222;
    font-family: "Noto Sans", "Open Sans", sans-serif;
    font-size: 14px;
    line-height: 20px;
}
button, select {
    margin: 0;
    padding: 0;
    border: 0;
    border-radius: 0;
    background: none;
    color: inherit;
    font: inherit;
}
svg {
    overflow: visible;
}
.sprite {
    position: absolute;
    width: 0;
    height: 0;
}
.serif {
    font-family: "Liberation Serif", serif;
}
.xyz {
    font-family: "Liberation Sans", sans-serif;
}

/* menu bar */
.menubar {
    display: flex;
    align-items: center;
    gap: 20px;
    height: 31px;
    padding: 0 3px 0 6px;
}
.menubar a {
    color: #222;
    text-decoration: none;
}
.menubar u {
    text-underline-offset: 2px;
}
.app-icon {
    width: 18px;
    height: 18px;
    margin-right: -7px;
}
.context-help {
    display: flex;
    align-items: center;
}
.context-help svg {
    width: 9px;
    height: 16px;
}
.minimize {
    width: 19px;
    height: 16px;
    margin-left: auto;
    margin-bottom: 4px;
    border: 1px solid #8b90a5;
    background: linear-gradient(#555, #555) center 10px / 8px 2px no-repeat #f5f6fc;
}

/* toolbars */
.toolbar {
    display: flex;
    height: 35px;
    border-top: 1px solid #adadb0;
}
.group {
    display: flex;
    align-items: center;
    padding-right: 3px;
    border-right: 1px solid #aaa;
    border-bottom: 1px solid #aaa;
    background: linear-gradient(#fdfdfe, #f1f1f3);
}
.grip {
    width: 2px;
    height: 17px;
    margin: 0 5px 0 3px;
    background: repeating-linear-gradient(#999 0 2px, transparent 2px 5px);
}
.group button {
    position: relative;
    display: flex;
    align-items: center;
    justify-content: center;
    width: 32px;
    height: 30px;
}
.group button svg {
    flex: none;
    width: 26px;
    height: 26px;
}
.group .pressed {
    border: 2px solid #70757a;
    border-radius: 4px;
    background: #d4d6d8;
}
.group .slim {
    width: 28px;
}
.group .slim svg {
    width: 22px;
}
.group .drop {
    width: 16px;
}
.group .drop svg {
    width: 10px;
    height: 6px;
}
.divider {
    width: 2px;
    height: 22px;
    margin: 0 1px;
    background: #bbb;
}
.more::after {
    content: "";
    position: absolute;
    right: 0;
    bottom: 0;
    border: 2px solid #111;
    border-top-color: transparent;
    border-left-color: transparent;
}
.views {
    border-top: 0;
    padding-left: 594px;
}
.views .group {
    padding-right: 5px;
}
.views .view-number {
    color: #b01c2e;
    font-family: "Liberation Sans", sans-serif;
    font-size: 22px;
    font-weight: bold;
}
.axes path {
    fill: none;
    stroke: #1c3c8c;
    stroke-width: 2;
}
.axes .tip {
    fill: #1c3c8c;
    stroke: none;
}
.axes .turn {
    stroke: #b01c2e;
}
.axes text {
    fill: #a52238;
    font-size: 10px;
    font-weight: bold;
}
.axes.small text {
    font-size: 9px;
}

/* drop-downs */
.combo {
    display: flex;
    width: 110px;
    height: 29px;
    border: 1px solid #999;
    border-top: 2px solid #777;
    border-left: 2px solid #777;
    background: #fff;
}
.combo select {
    flex: 1;
    min-width: 0;
    padding-left: 4px;
    appearance: none;
    outline: none;
}
.combo .arrow {
    display: flex;
    align-items: center;
    justify-content: center;
    width: 14px;
    border: 1px solid #666;
    background: linear-gradient(#fbfbfb, #d2d2d5);
}
.arrow svg {
    width: 8px;
    height: 5px;
}
.combo-filter {
    width: 133px;
    border: 1px solid #aaa;
}
.combo-color {
    width: 150px;
    border: 1px solid #aaa;
}
.combo-module {
    width: 133px;
}
.spin {
    display: flex;
    flex-direction: column;
    width: 12px;
    margin: 1px 0 1px 1px;
}
.spin svg {
    flex: 1;
    width: 11px;
    min-height: 0;
    padding: 3px 2px;
    border: 1px solid #bbb;
    fill: #aaa;
}
.spin.live svg {
    fill: #777;
}

/* model tree */
.workspace {
    flex: 1;
    display: flex;
    min-height: 0;
}
.browser {
    display: flex;
    flex-direction: column;
    width: 267px;
    padding: 8px 0 2px 3px;
}
.tabs {
    display: flex;
    align-items: flex-end;
}
.tab {
    width: 65px;
    height: 27px;
    border: 1px solid #999;
    border-bottom: 0;
    background: linear-gradient(#f3f3f3, #dadadd);
}
.tab.active {
    height: 30px;
    border-color: #aaa;
    background: #fdfdff;
}
.pane {
    flex: 1;
    display: flex;
    flex-direction: column;
    min-height: 0;
    padding: 8px 0 0 2px;
    border: 1px solid #aaa;
    border-top: 0;
    box-shadow: inset 0 1px #ccc;
}
.database {
    display: flex;
    align-items: center;
    height: 28px;
    margin-bottom: 5px;
}
.combo-database {
    width: 141px;
    height: 28px;
    border: 1px solid #bbb;
}
.combo-database select {
    padding-left: 4px;
}
.stack {
    width: 22px;
    height: 20px;
    margin: 3px 0 0 2px;
}
.database button {
    display: flex;
    justify-content: center;
    flex: 1;
}
.database button svg {
    width: 20px;
    height: 20px;
}
.database .updown {
    flex: none;
    width: 28px;
}
.database .updown svg {
    width: 12px;
}
.database .tip-button {
    justify-content: flex-end;
}
.tree-frame {
    flex: 1;
    display: flex;
    min-height: 0;
    border: 1px solid #aaa;
    border-bottom: 0;
    background: #fff;
}
.tree {
    flex: 1;
    display: flex;
    flex-direction: column;
    min-width: 0;
    margin: 0;
    padding: 0;
    list-style: none;
}
.tree li {
    position: relative;
    flex: 1 0 0;
    display: flex;
    align-items: center;
    gap: 4px;
    min-height: 0;
    overflow: hidden;
    padding-left: 18px;
    white-space: nowrap;
}
.tree li::before {
    content: "";
    position: absolute;
    top: 0;
    bottom: 0;
    left: 7px;
    border-left: 1px dotted #bbb;
}
.tree .first::before {
    top: 50%;
}
.tree svg, .script {
    flex: none;
    width: 20px;
    height: 20px;
}
.tree span {
    padding-left: 2px;
}
.tree .first {
    padding-left: 2px;
}
.tree .model {
    padding-left: 23px;
}
.tree .leaf {
    padding-left: 61px;
}
.tree .leaf:has(.toggle) {
    padding-left: 45px;
}
.leaf::after {
    content: "";
    position: absolute;
    top: 0;
    bottom: 0;
    left: 50px;
    width: 8px;
    border-left: 1px dotted #bbb;
    background: repeating-linear-gradient(to right, #bbb 0 1px, transparent 1px 2px) 0 50% / 8px 1px no-repeat;
}
.last::after {
    bottom: 50%;
    background-position: 0 100%;
}
.tree .partial {
    flex: 0 0 7px;
    align-items: flex-start;
}
.toggle {
    position: relative;
    z-index: 1;
    flex: none;
    width: 12px;
    height: 12px;
    border: 1px solid #999;
    background: #fff;
    font-size: 12px;
    line-height: 9px;
}
.tree .current {
    padding: 0;
    margin-left: 1px;
    line-height: 20px;
    border-bottom: 2px solid #111;
}
.script {
    font-family: "DejaVu Math TeX Gyre", "DejaVu Sans", "DejaVu Serif", serif;
    font-size: 18px;
    font-weight: normal;
    text-align: center;
}
.vscroll {
    display: flex;
    flex-direction: column;
    align-items: center;
    width: 19px;
    padding: 8px 0;
    background: #f1f1f3;
}
.vscroll svg {
    width: 8px;
    height: 5px;
    margin-bottom: 10px;
}
.vscroll svg:last-child {
    margin: auto 0 0;
}
.thumb {
    display: flex;
    align-items: center;
    justify-content: center;
    border: 1px solid #999;
    border-radius: 2px;
    background: linear-gradient(to right, #f5f5f5, #c8c8cb);
}
.vscroll .thumb {
    width: 18px;
    height: 82%;
}
.vscroll .thumb i {
    width: 8px;
    height: 11px;
    background: repeating-linear-gradient(#666 0 2px, transparent 2px 4px);
}
.hscroll {
    display: flex;
    align-items: center;
    height: 20px;
    margin-right: 19px;
    padding: 0 10px 0 8px;
    background: #f1f1f3;
}
.hscroll svg {
    width: 5px;
    height: 8px;
}
.hscroll svg:last-child {
    margin-left: auto;
}
.hscroll .thumb {
    width: 143px;
    height: 18px;
    margin-left: 11px;
    background: linear-gradient(#f5f5f5, #d0d0d3);
}
.hscroll .thumb i {
    width: 10px;
    height: 8px;
    background: repeating-linear-gradient(to right, #666 0 2px, transparent 2px 4px);
}

/* part editor */
.editor {
    flex: 1;
    display: flex;
    flex-direction: column;
    min-width: 0;
}
.context-bar {
    display: flex;
    align-items: center;
    gap: 6px;
    height: 41px;
    padding: 0 0 2px 18px;
    background: linear-gradient(to right, transparent, #f8f8fb);
}
.context-bar .combo {
    margin-right: 12px;
}
.stage {
    flex: 1;
    display: flex;
    min-height: 0;
}
.toolbox {
    width: 86px;
    padding: 4px 4px 0 10px;
    background: #f6f5f9;
}
.tools {
    display: grid;
    grid-template-columns: 36px 36px;
    grid-auto-rows: 35px;
    padding: 4px 0;
    border-bottom: 1px solid #999;
}
.tools:first-child {
    padding: 0 0 2px;
}
.tools:last-child {
    border-bottom: 0;
}
.tools button {
    position: relative;
    display: flex;
    align-items: center;
    justify-content: center;
}
.tools svg {
    width: 27px;
    height: 27px;
}
.tools .more::after {
    right: 2px;
    bottom: 2px;
}
.viewport {
    position: relative;
    flex: 1;
    border-top: 1px solid #777;
    border-left: 1px solid #777;
    background: linear-gradient(#1b2c48, #23304d 25%, #2c3b56 50%, #34435c 60%, #6e7b96 78%, #8c9aba 90%, #a0acc8);
}
.pointer {
    position: absolute;
    top: 13px;
    left: 16px;
    width: 15px;
    height: 24px;
}
.brand {
    display: flex;
    align-items: center;
    justify-content: flex-end;
    gap: 6px;
    height: 42px;
    padding-top: 6px;
    overflow: hidden;
    background: linear-gradient(#fff, #f0f0f2);
    color: #2ba087;
    font-family: "DejaVu Sans", sans-serif;
    font-size: 18px;
    font-style: italic;
}
.brand svg {
    width: 26px;
    height: 30px;
    fill: #2ba087;
}
.brand span {
    width: 48px;
}
```
